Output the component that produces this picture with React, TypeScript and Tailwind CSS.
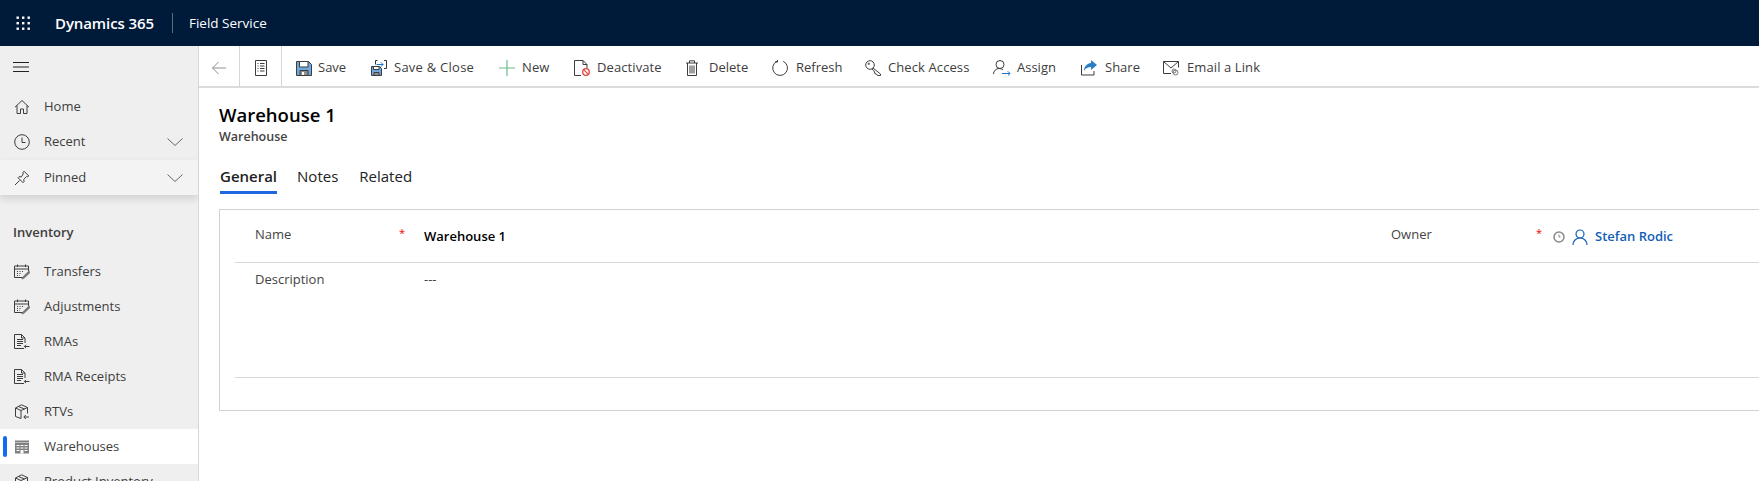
import type { ReactNode } from "react";

const FONT = "font-['Open_Sans','Noto_Sans',sans-serif]";

type IconProps = { className?: string };

const Ico = ({ children, className = "" }: { children: ReactNode; className?: string }) => (
  <svg
    viewBox="0 0 16 16"
    fill="none"
    stroke="currentColor"
    strokeWidth="1"
    className={`block w-4 h-4 shrink-0 ${className}`}
  >
    {children}
  </svg>
);

const Waffle = () => (
  <svg viewBox="0 0 16 16" className="block w-4 h-4 fill-white">
    {[1.5, 7, 12.5].map((y) =>
      [1.5, 7, 12.5].map((x) => <rect key={`${x}-${y}`} x={x} y={y} width="2.4" height="2.4" />),
    )}
  </svg>
);

const HomeIcon = ({ className }: IconProps) => (
  <Ico className={className}>
    <path d="M1 8.200 8 1.500l7 6.700M3 6.500v8h3.500v-4.500h3v4.500H13v-8" />
  </Ico>
);
const ClockIcon = ({ className }: IconProps) => (
  <Ico className={className}>
    <circle cx="8" cy="8" r="7.300" />
    <path d="M8 3.500V8.500H11.500" />
  </Ico>
);
const PinIcon = ({ className }: IconProps) => (
  <Ico className={className}>
    <path d="M10 1.200 14.800 6l-1 .8-1.200-.3-2.800 2.800.2 2.400-1 1-5-5 1-1 2.400.2L9.200 4l-.2-1.600zM5.500 10.500 1 15" />
  </Ico>
);
const CalendarEditIcon = ({ className }: IconProps) => (
  <Ico className={className}>
    <path d="M9 13.500H.500V2h14v5M.500 5h14M3.500.500V3M11.500.500V3" />
    <path strokeDasharray="1 1.500" d="M3 7.500h7M3 9.500h5M3 11.500h3" />
    <path strokeWidth="1.400" stroke="#777" d="M15 7.500 9.500 13l-1.500 2 2-1.200L15.500 8.500z" />
  </Ico>
);
const DocArrowIcon = ({ className }: IconProps) => (
  <Ico className={className}>
    <path d="M10 14.500H.500V.500h7l3.500 3.500v5M7.500.500V4h3.500M3 5.500h6M3 7.500h6M3 9.500h6M3 11.500h4" />
    <path d="M15.500 12.500h-5M12 10.800l-1.700 1.700 1.700 1.700" />
  </Ico>
);
const BoxArrowIcon = ({ className }: IconProps) => (
  <Ico className={className}>
    <path d="M7 14.500 1.500 12.500V4L7.500.800 13.500 3.500v6M1.500 4 7 6.500l6.500-3M7 6.500v8M4.500 2.500l6 2.500" />
    <path d="M15 13h-5M11.800 11l-2 2 2 2" />
  </Ico>
);
const WarehouseIcon = ({ className }: IconProps) => (
  <svg viewBox="0 0 16 16" className={`block w-4 h-4 shrink-0 ${className}`}>
    <path fill="#808080" d="M1 1.500h14V3H1zM1 3.500h14V14.500H1z" />
    <path
      fill="#fff"
      d="M2.500 6h3v1h-3zM6.500 6h3v1h-3zM10.500 6h3v1h-3zM2.500 8.500h3v1h-3zM6.500 8.500h3v1h-3zM10.500 8.500h3v1h-3zM2.500 11h3v1h-3zM6.500 11h3v3.500h-3zM10.500 11h3v1h-3z"
    />
  </svg>
);
const SaveIcon = () => (
  <svg viewBox="0 0 16 16" className="block w-4 h-4 shrink-0">
    <path fill="#6fa8dc" stroke="#3d3d3d" d="M.500 1.500h12l3 3v11H.500z" />
    <path fill="#fff" stroke="#3d3d3d" d="M3.500 1.500h8.500v5.500H3.500z" />
    <path fill="#8f8f8f" stroke="#3d3d3d" d="M4 10.500h8v5H4z" />
    <path fill="#fff" d="M6 12h2v3H6z" />
  </svg>
);
const SaveCloseIcon = () => (
  <svg viewBox="0 0 16 16" className="block w-4 h-4 shrink-0">
    <path fill="#6fa8dc" stroke="#3d3d3d" d="M.500 6.500h8l2 2v7H.500z" />
    <path fill="#fff" stroke="#3d3d3d" d="M2.500 6.500h5.500v3H2.500z" />
    <path fill="#8f8f8f" stroke="#3d3d3d" d="M3 12.500h5v3H3z" />
    <path fill="none" stroke="#333" d="M4.500 4.500V.500h2M13 .500h2.500v8H13" />
    <path fill="none" stroke="#1e73c8" d="M5.500 4.500H12M9.800 2.200l2.300 2.300-2.300 2.300" />
  </svg>
);
const PlusIcon = () => (
  <Ico className="text-[#68bd8a]">
    <path strokeWidth="1.200" d="M8 0v16M0 8h16" />
  </Ico>
);
const DeactivateIcon = () => (
  <svg viewBox="0 0 16 16" className="block w-4 h-4 shrink-0" fill="none">
    <path stroke="#3d3d3d" d="M7 15.500H.500V.500h8.500l4 4V8M9 .500V4.500h4" />
    <circle cx="12" cy="12" r="3.300" stroke="#e0413c" strokeWidth="1.300" />
    <path stroke="#e0413c" strokeWidth="1.200" d="m9.700 9.700 4.600 4.600" />
  </svg>
);
const TrashIcon = () => (
  <Ico className="text-[#3d3d3d]">
    <path d="M2 3h12M5.500 3V.800h5V3M3.500 3v12.500h9V3M6 5.500v8M8 5.500v8M10 5.500v8" />
  </Ico>
);
const RefreshIcon = () => (
  <Ico className="text-[#3d3d3d]">
    <path d="M5 1.300a7.400 7.400 0 1 0 6.200 0" />
    <path d="M5.500 -.500V2H3" />
  </Ico>
);
const KeyIcon = () => (
  <Ico className="text-[#3d3d3d]">
    <circle cx="5" cy="5" r="4.300" />
    <circle cx="3.800" cy="3.800" r=".7" />
    <path d="m8 8 7.500 6v1.500h-3l-1-1.500-1.500-.2L9.500 12 8.700 10.500 6.800 9.100" />
  </Ico>
);
const AssignIcon = () => (
  <svg viewBox="0 0 18 16" className="block w-[18px] h-4 shrink-0" fill="none">
    <circle cx="7" cy="4.500" r="4" stroke="#3d3d3d" />
    <path stroke="#3d3d3d" d="M.500 14c0-3 2.500-5.500 5.500-5.500 1.500 0 3 .5 4 1.500" />
    <path stroke="#1e73c8" d="M9 13.500h8M14.800 11.300l2.200 2.200-2.200 2.200" />
  </svg>
);
const ShareIcon = () => (
  <svg viewBox="0 0 16 16" className="block w-4 h-4 shrink-0">
    <path fill="none" stroke="#3d3d3d" d="M.500 5v10h12.500v-4" />
    <path fill="#2d7cc4" d="M10 0l6 5-6 5V7C7 7 4.500 8 3 11c0-4 2.500-7.500 7-8z" />
  </svg>
);
const EmailLinkIcon = () => (
  <svg viewBox="0 0 16 16" className="block w-4 h-4 shrink-0" fill="none">
    <path stroke="#3d3d3d" d="M8 13.500H.500V1.500h15v6M.500 1.500 8 8l7.500-6.500" />
    <circle cx="11" cy="11" r="2" stroke="#777" />
    <circle cx="12.500" cy="12.500" r="2.500" stroke="#777" />
  </svg>
);
const BackArrow = () => (
  <Ico className="text-[#8f8f8f]">
    <path d="M15 8H1.500M7.500 2 1.500 8l6 6" />
  </Ico>
);
const FormIcon = () => (
  <Ico className="text-[#3d3d3d]">
    <path d="M2.500 .500h11v15h-11z" />
    <path d="M4.500 3.500h1M4.500 6h1M4.500 8.500h1M4.500 11h1M7 3.500h4.500M7 6h4.500M7 8.500h4.500M7 11h4.500" />
  </Ico>
);
const Chevron = () => (
  <svg viewBox="0 0 16 8" className="block w-4 h-2 text-[#666]" fill="none" stroke="currentColor">
    <path d="M.500.500 8 7.500 15.500.500" />
  </svg>
);

const commands: { label: string; icon: ReactNode; cls: string }[] = [
  { label: "Save", icon: <SaveIcon />, cls: "w-[75px] gap-[6px]" },
  { label: "Save & Close", icon: <SaveCloseIcon />, cls: "w-[128px] gap-[7px] tracking-[0.25px]" },
  { label: "New", icon: <PlusIcon />, cls: "w-[75px] gap-[7px] tracking-[0.1px]" },
  { label: "Deactivate", icon: <DeactivateIcon />, cls: "w-[110px] gap-[7px] tracking-[0.1px]" },
  { label: "Delete", icon: <TrashIcon />, cls: "w-[88px] gap-[9px]" },
  { label: "Refresh", icon: <RefreshIcon />, cls: "w-[93px] gap-[8px]" },
  { label: "Check Access", icon: <KeyIcon />, cls: "w-[128px] gap-[7px] tracking-[0.1px]" },
  { label: "Assign", icon: <AssignIcon />, cls: "w-[88px] gap-[6px]" },
  { label: "Share", icon: <ShareIcon />, cls: "w-[82px] gap-[8px]" },
  { label: "Email a Link", icon: <EmailLinkIcon />, cls: "gap-[8px] tracking-[0.1px]" },
];

const NavRow = ({ icon, label, chevron }: { icon: ReactNode; label: string; chevron?: boolean }) => (
  <div className="flex items-center h-[35px] pl-[14px] pr-[15px] text-[#3d3d3d]">
    {icon}
    <span className="ml-[14px] flex-1 text-[13px]">{label}</span>
    {chevron && <Chevron />}
  </div>
);

const inventory: { label: string; icon: ReactNode }[] = [
  { label: "Transfers", icon: <CalendarEditIcon /> },
  { label: "Adjustments", icon: <CalendarEditIcon /> },
  { label: "RMAs", icon: <DocArrowIcon /> },
  { label: "RMA Receipts", icon: <DocArrowIcon /> },
  { label: "RTVs", icon: <BoxArrowIcon /> },
];

export default function App() {
  return (
    <div className={`h-screen overflow-hidden flex flex-col bg-white ${FONT}`}>
      {/* top bar */}
      <header className="h-[46px] shrink-0 flex items-center bg-[#001a3a] text-white">
        <div className="ml-[15px]">
          <Waffle />
        </div>
        <span className="ml-[24px] text-[15px] font-semibold tracking-[-0.1px]">Dynamics 365</span>
        <div className="ml-[18px] w-px h-[20px] bg-[#5c6b80]" />
        <span className="ml-[16px] text-[13.5px]">Field Service</span>
      </header>

      <div className="flex-1 flex min-h-0">
        {/* sitemap */}
        <aside className="w-[199px] shrink-0 bg-[#efefef] border-r border-[#d6d6d6] overflow-hidden">
          <div className="h-[35px] mt-[3px] mb-[5px] flex items-center pl-[13px]">
            <svg viewBox="0 0 16 10" className="block w-4 h-[10px] text-[#222]" fill="none" stroke="currentColor">
              <path d="M0 .500h16M0 5h16M0 9.500h16" />
            </svg>
          </div>
          <NavRow icon={<HomeIcon />} label="Home" />
          <NavRow icon={<ClockIcon />} label="Recent" chevron />
          <div className="mt-[1px] bg-[#f3f3f3] shadow-[0_4px_8px_rgba(0,0,0,0.12)]">
            <NavRow icon={<PinIcon />} label="Pinned" chevron />
          </div>
          <div className="mt-[26px] mb-[9px] pl-[13px] h-[24px] flex items-center text-[13px] font-semibold text-[#3d3d3d]">
            Inventory
          </div>
          {inventory.map((item) => (
            <NavRow key={item.label} icon={item.icon} label={item.label} />
          ))}
          <div className="relative bg-white">
            <div className="absolute left-[3px] top-[7px] w-1 h-[21px] rounded-sm bg-[#0f6cf0]" />
            <NavRow icon={<WarehouseIcon />} label="Warehouses" />
          </div>
          <NavRow icon={<BoxArrowIcon />} label="Product Inventory" />
        </aside>

        <main className="flex-1 min-w-0">
          {/* command bar */}
          <div className="h-[42px] flex border-b-2 border-[#dcdcdc] text-[#3d3d3d]">
            <div className="w-[41px] pt-[3px] flex items-center justify-center border-r border-[#d6d6d6]">
              <BackArrow />
            </div>
            <div className="w-[42px] pt-[3px] flex items-center justify-center border-r border-[#d6d6d6]">
              <FormIcon />
            </div>
            <div className="flex items-center pt-[3px] ml-[14px]">
              {commands.map((c) => (
                <div key={c.label} className={`flex items-center text-[13px] whitespace-nowrap ${c.cls}`}>
                  {c.icon}
                  <span>{c.label}</span>
                </div>
              ))}
            </div>
          </div>

          {/* record header */}
          <div className="pl-[20px] pt-[14px]">
            <h1 className="text-[18.5px] leading-[26px] font-semibold text-black">Warehouse 1</h1>
            <div className="text-[12.5px] leading-[17px] font-semibold text-[#444]">Warehouse</div>
          </div>

          {/* tabs */}
          <div className="pl-[21px] mt-[19px] flex text-[15px] leading-[24px] text-[#222]">
            <div className="font-semibold border-b-[3px] border-[#1f66e0] h-[30px]">General</div>
            <div className="ml-[20px]">Notes</div>
            <div className="ml-[21px]">Related</div>
          </div>

          {/* form section */}
          <section className="ml-[20px] mt-[15px] border-l border-t border-b border-[#d2d2d2] text-[13px] text-[#444]">
            <div className="ml-[15px] h-[53px] pl-[20px] flex border-b border-[#d8d8d8] pt-[15px]">
              <div className="flex w-[1136px]">
                <span className="w-[144px]">Name</span>
                <span className="w-[25px] text-[#e00] text-[11px]">*</span>
                <span className="font-semibold text-black mt-[2px]">Warehouse 1</span>
              </div>
              <div className="flex">
                <span className="w-[145px]">Owner</span>
                <span className="w-[17px] text-[#e00] text-[11px]">*</span>
                <div className="flex items-center h-[22px] mt-[1px]">
                  <svg viewBox="0 0 12 12" className="block w-3 h-3" fill="none" stroke="#888" strokeWidth="1.500">
                    <circle cx="6" cy="6" r="5" />
                    <path strokeWidth="1" d="M6 3.500V6h1.500" />
                  </svg>
                  <svg viewBox="0 0 16 16" className="block w-4 h-4 ml-[7px]" fill="none" stroke="#1160b7" strokeWidth="1.200">
                    <circle cx="8" cy="5" r="4" />
                    <path d="M1 16c0-4 3-7 7-7s7 3 7 7" />
                  </svg>
                  <span className="ml-[7px] font-semibold text-[#1160b7]">Stefan Rodic</span>
                </div>
              </div>
            </div>
            <div className="ml-[15px] h-[115px] pl-[20px] flex border-b border-[#d8d8d8] pt-[7px]">
              <span className="w-[169px]">Description</span>
              <span>---</span>
            </div>
            <div className="h-[32px]" />
          </section>
        </main>
      </div>
    </div>
  );
}
